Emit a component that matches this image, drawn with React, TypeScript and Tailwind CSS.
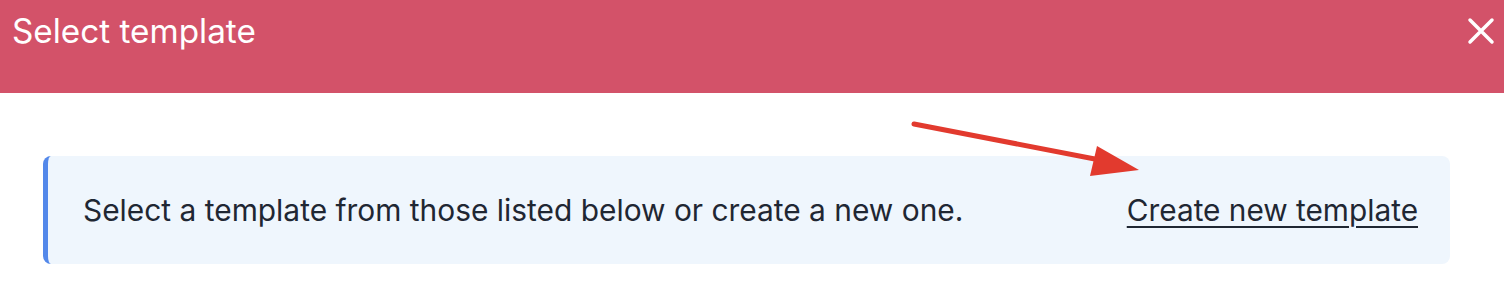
import React from "react";

export default function App() {
  return (
    <div className="relative w-[1504px] h-[284px] bg-white overflow-hidden" style={{ fontFamily: "Inter, 'Noto Sans', sans-serif" }}>
      <div className="h-[93px] bg-[#d35269] flex items-start justify-between pl-[12px] pr-[9px] pt-[11px]">
        <h1 className="text-white text-[33.3px] leading-[40px] font-normal">Select template</h1>
        <button className="text-white mt-[6px]" aria-label="Close">
          <svg width="28" height="28" viewBox="0 0 28 28" fill="none" stroke="white" strokeWidth="3.5" strokeLinecap="round">
            <path d="M3 3 L25 25 M25 3 L3 25" />
          </svg>
        </button>
      </div>
      <div className="pt-[63px] pl-[43px] pr-[54px]">
        <div className="h-[108px] rounded-[8px] border-l-[5px] border-[#5388ea] bg-[#eff6fd] flex items-center justify-between pl-[35px] pr-[32px]">
          <p className="text-[29.9px] leading-[36px] text-[#1f2733]">Select a template from those listed below or create a new one.</p>
          <a href="#" className="text-[29.8px] leading-[36px] text-[#1f2733] underline underline-offset-[5px] decoration-2">Create new template</a>
        </div>
      </div>
      <svg className="absolute left-0 top-0" width="1504" height="284" viewBox="0 0 1504 284">
        <line x1="914" y1="124" x2="1100" y2="160" stroke="#e23a2e" strokeWidth="5" strokeLinecap="round" />
        <polygon points="1097,146 1139,170 1090,176" fill="#e23a2e" />
      </svg>
    </div>
  );
}
